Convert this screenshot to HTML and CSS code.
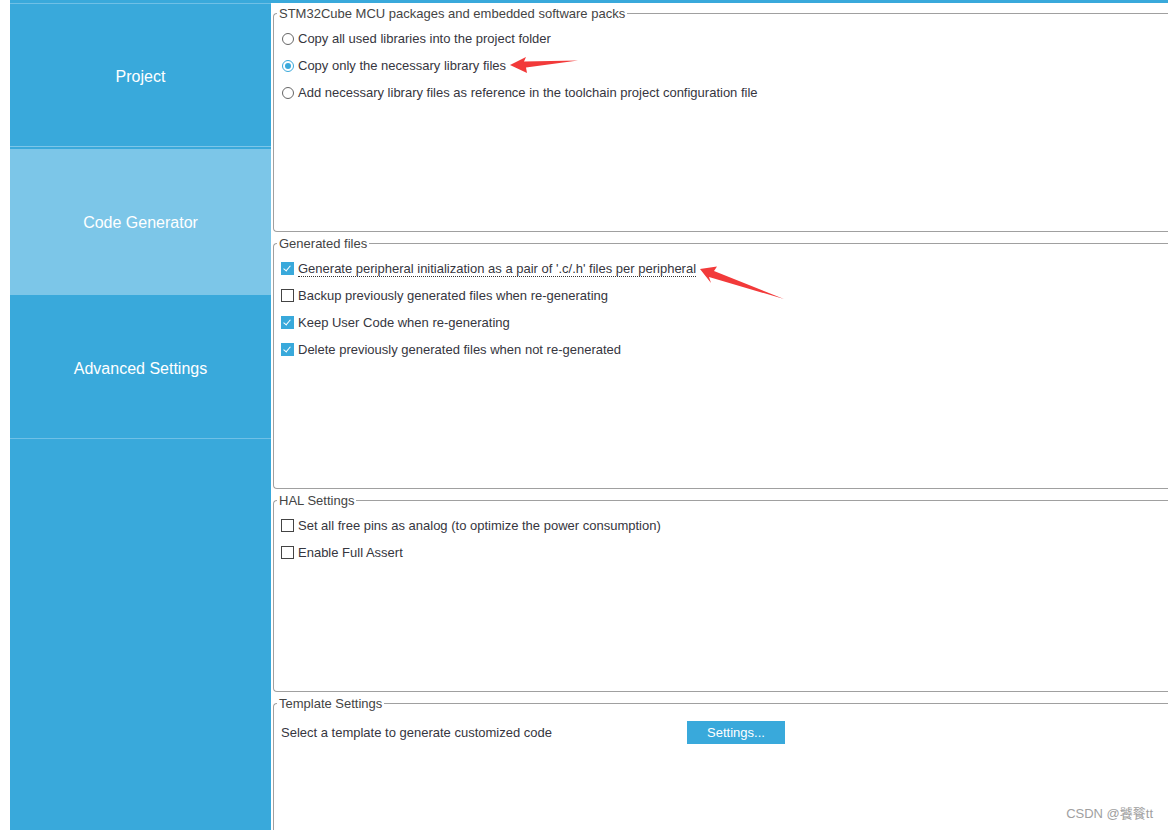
FILE: index.html
```html
<!DOCTYPE html>
<html lang="en">
<head>
<meta charset="utf-8">
<title>Code Generator</title>
<link rel="stylesheet" href="styles.css">
</head>
<body>
<div class="app">
  <div class="topbar"></div>
  <div class="main">
    <nav class="sidebar">
      <div class="nav-item nav-project">Project</div>
      <div class="nav-item nav-active">Code Generator</div>
      <div class="nav-item nav-advanced">Advanced Settings</div>
      <div class="nav-rest"></div>
    </nav>
    <div class="content">
      <fieldset class="group group-packs">
        <legend>STM32Cube MCU packages and embedded software packs</legend>
        <div class="rows">
          <label class="row"><span class="radio"></span><span>Copy all used libraries into the project folder</span></label>
          <label class="row"><span class="radio checked"></span><span>Copy only the necessary library files</span></label>
          <label class="row"><span class="radio"></span><span>Add necessary library files as reference in the toolchain project configuration file</span></label>
        </div>
      </fieldset>
      <fieldset class="group group-files">
        <legend>Generated files</legend>
        <div class="rows">
          <label class="row"><span class="check checked"></span><span class="focused">Generate peripheral initialization as a pair of '.c/.h' files per peripheral</span></label>
          <label class="row"><span class="check"></span><span>Backup previously generated files when re-generating</span></label>
          <label class="row"><span class="check checked"></span><span>Keep User Code when re-generating</span></label>
          <label class="row"><span class="check checked"></span><span>Delete previously generated files when not re-generated</span></label>
        </div>
      </fieldset>
      <fieldset class="group group-hal">
        <legend>HAL Settings</legend>
        <div class="rows">
          <label class="row"><span class="check"></span><span>Set all free pins as analog (to optimize the power consumption)</span></label>
          <label class="row"><span class="check"></span><span>Enable Full Assert</span></label>
        </div>
      </fieldset>
      <fieldset class="group group-template">
        <legend>Template Settings</legend>
        <div class="rows template-rows">
          <div class="template-row">
            <span class="template-label">Select a template to generate customized code</span>
            <button class="btn">Settings...</button>
          </div>
        </div>
      </fieldset>
    </div>
  </div>
  <svg class="annotations" width="1168" height="830" viewBox="0 0 1168 830">
    <polygon points="510,65 526,57 524,61.5 578,60.5 526,67.5 527,73" fill="#f23a3a"/>
    <polygon points="700,269 717,266.5 714,271 784,299 709,277 711,283" fill="#f23a3a"/>
  </svg>
  <div class="watermark">CSDN @饕餮tt</div>
</div>
</body>
</html>
```

FILE: styles.css
```css
html, body {
  margin: 0;
  padding: 0;
  background: #ffffff;
}

body {
  font-family: "Liberation Sans", Arial, sans-serif;
  font-size: 13px;
  color: #363640;
  width: 1168px;
  height: 830px;
  overflow: hidden;
}

.app {
  position: relative;
  width: 1168px;
  height: 830px;
  padding-left: 10px;
  box-sizing: border-box;
}

.topbar {
  height: 3px;
  background: #39a9db;
}

.main {
  display: flex;
  height: 827px;
}

.sidebar {
  width: 261px;
  flex: 0 0 261px;
  display: flex;
  flex-direction: column;
  background: #39a9db;
  border-top: 1px solid #6fc0e6;
  box-sizing: border-box;
}

.nav-item {
  display: flex;
  align-items: center;
  justify-content: center;
  color: #ffffff;
  font-size: 16px;
  box-sizing: border-box;
}

.nav-project {
  height: 143px;
  padding-top: 3px;
  border-bottom: 1px solid #7cc6e8;
}

.nav-active {
  margin-top: 2px;
  height: 146px;
  padding-top: 1px;
  background: #7cc6e8;
}

.nav-advanced {
  height: 144px;
  padding-top: 4px;
  border-bottom: 1px solid #6fc0e6;
}

.nav-rest {
  flex: 1;
}

.content {
  flex: 1;
  margin-left: 2px;
  padding-top: 3px;
  overflow: hidden;
}

.group {
  margin: 0 0 4px 0;
  padding: 0 0 0 7px;
  border: 1px solid #a0a0a0;
  border-right: 0;
  border-radius: 4px 0 0 4px;
  box-sizing: border-box;
}

.group legend {
  font-size: 13px;
  line-height: 15px;
  color: #444444;
  padding: 0 2px;
  margin-left: -4px;
}

.group-packs { height: 226px; }
.group-files { height: 253px; }
.group-hal { height: 199px; }
.group-template { height: 200px; }

.rows {
  display: flex;
  flex-direction: column;
  padding-top: 4px;
}

.row {
  display: flex;
  align-items: center;
  height: 27px;
  gap: 4px;
  line-height: 15px;
}

.radio {
  width: 12px;
  height: 12px;
  margin-left: 1px;
  border: 1px solid #666666;
  border-radius: 50%;
  box-sizing: border-box;
  background: #ffffff;
  position: relative;
  flex: 0 0 auto;
}

.radio.checked {
  border-color: #39a9db;
}

.radio.checked::after {
  content: "";
  position: absolute;
  left: 2px;
  top: 2px;
  width: 6px;
  height: 6px;
  border-radius: 50%;
  background: #39a9db;
}

.check {
  width: 13px;
  height: 13px;
  border: 1px solid #444444;
  box-sizing: border-box;
  background: #ffffff;
  position: relative;
  flex: 0 0 auto;
}

.check.checked {
  border-color: #39a9db;
  background: #39a9db;
}

.check.checked::after {
  content: "";
  position: absolute;
  left: 3px;
  top: 1px;
  width: 3px;
  height: 6px;
  border-right: 1.5px solid #ffffff;
  border-bottom: 1.5px solid #ffffff;
  transform: rotate(40deg);
}

.focused {
  border-bottom: 1px dotted #333333;
  line-height: 14px;
  padding-top: 1px;
}

.template-rows {
  padding-top: 8px;
}

.template-row {
  display: flex;
  align-items: center;
  height: 27px;
}

.template-label {
  width: 406px;
  flex: 0 0 406px;
}

.btn {
  width: 98px;
  height: 23px;
  border: 0;
  padding: 0;
  background: #39a9db;
  color: #ffffff;
  font-family: "Liberation Sans", Arial, sans-serif;
  font-size: 13px;
}

.annotations {
  position: absolute;
  left: 0;
  top: 0;
  pointer-events: none;
}

.watermark {
  position: absolute;
  right: 15px;
  bottom: 8px;
  font-family: "Liberation Sans", "Noto Sans CJK SC", sans-serif;
  font-size: 13px;
  color: #a0a0a0;
}
```
